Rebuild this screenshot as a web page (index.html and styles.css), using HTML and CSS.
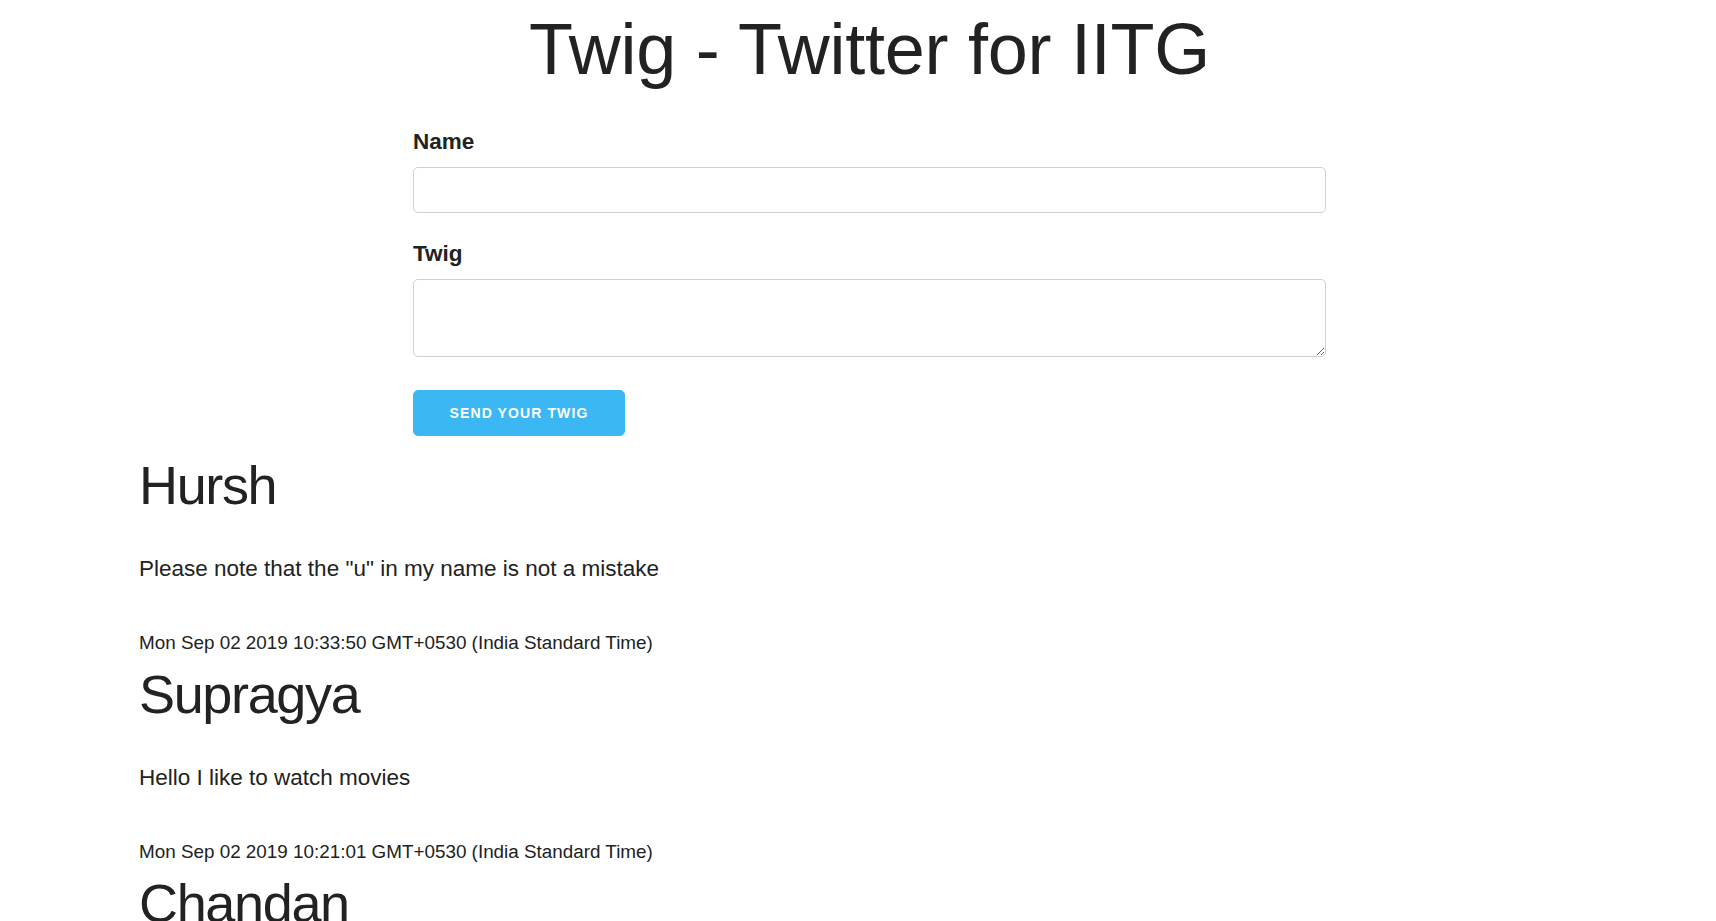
FILE: index.html
```html
<!DOCTYPE html>
<html lang="en">
<head>
<meta charset="utf-8">
<title>Twig - Twitter for IITG</title>
<link rel="stylesheet" href="styles.css">
</head>
<body>
<div class="container">
  <h1 class="title">Twig - Twitter for IITG</h1>
  <form class="twig-form">
    <label class="field-label" for="name">Name</label>
    <input class="field-input" type="text" id="name">
    <label class="field-label" for="twig">Twig</label>
    <textarea class="field-textarea" id="twig"></textarea>
    <button class="send-btn" type="button">Send your twig</button>
  </form>
  <div class="twigs">
    <div class="twig">
      <h3 class="twig-name">Hursh</h3>
      <p class="twig-text">Please note that the "u" in my name is not a mistake</p>
      <div class="twig-date">Mon Sep 02 2019 10:33:50 GMT+0530 (India Standard Time)</div>
    </div>
    <div class="twig">
      <h3 class="twig-name">Supragya</h3>
      <p class="twig-text">Hello I like to watch movies</p>
      <div class="twig-date">Mon Sep 02 2019 10:21:01 GMT+0530 (India Standard Time)</div>
    </div>
    <div class="twig">
      <h3 class="twig-name">Chandan</h3>
      <p class="twig-text">Twig is awesome</p>
      <div class="twig-date">Mon Sep 02 2019 10:15:12 GMT+0530 (India Standard Time)</div>
    </div>
  </div>
</div>
</body>
</html>
```

FILE: styles.css
```css
html, body {
  margin: 0;
  padding: 0;
  background: #fff;
}
body {
  font-family: "Liberation Sans", Arial, Helvetica, sans-serif;
  color: #222;
  font-size: 22.5px;
  line-height: 1.6;
}
.container {
  margin: 0 116px 0 139px;
}
.title {
  margin: 6px 0 0;
  font-size: 72px;
  font-weight: 400;
  line-height: 1.2;
  letter-spacing: -0.25px;
  text-align: center;
}
.twig-form {
  width: 913px;
  margin: 32px auto 0;
  display: flex;
  flex-direction: column;
  align-items: flex-start;
}
.field-label {
  display: block;
  font-size: 22.5px;
  font-weight: 700;
  line-height: 36px;
  margin-bottom: 7px;
}
.field-input,
.field-textarea {
  box-sizing: border-box;
  width: 100%;
  border: 1px solid #d1d1d1;
  border-radius: 5px;
  background: #fff;
  font-family: inherit;
  font-size: 18px;
  padding: 7px 12px;
  margin: 0;
  outline: none;
}
.field-input {
  height: 46px;
  margin-bottom: 23px;
}
.field-textarea {
  height: 78px;
  resize: vertical;
  margin-bottom: 33px;
}
.send-btn {
  box-sizing: border-box;
  width: 212px;
  height: 46px;
  border: 1px solid #3bb7f4;
  border-radius: 5px;
  background: #3bb7f4;
  color: #fff;
  font-family: inherit;
  font-size: 14px;
  font-weight: 700;
  letter-spacing: 1.1px;
  text-transform: uppercase;
  padding: 0;
  cursor: pointer;
}
.twigs {
  margin-top: 16.5px;
  display: flex;
  flex-direction: column;
}
.twig-name {
  margin: 0;
  font-size: 54px;
  font-weight: 400;
  line-height: 1.2;
  letter-spacing: -1.35px;
}
.twig-text {
  margin: 33.5px 0 0;
  font-size: 22.5px;
  line-height: 36px;
}
.twig-date {
  margin: 40.8px 0 4px;
  font-size: 18.85px;
  line-height: 30px;
}
```
